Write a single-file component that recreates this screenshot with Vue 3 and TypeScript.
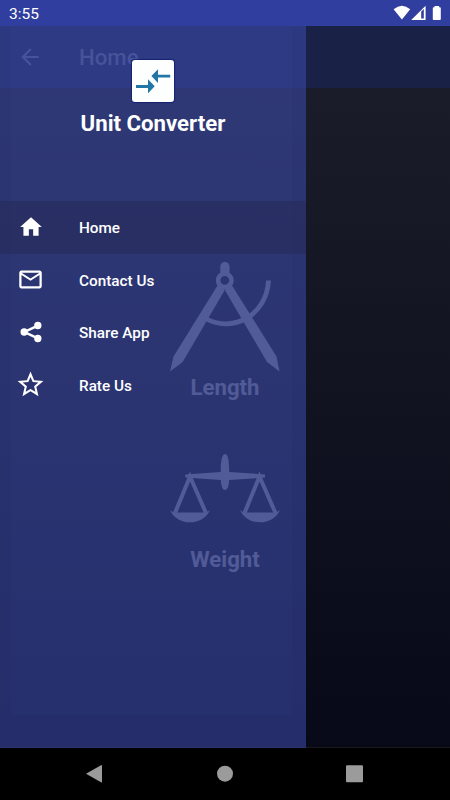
<script setup lang="ts">
interface MenuItem {
  label: string
  size: number
  path: string
  active?: boolean
}

const items: MenuItem[] = [
  { label: 'Home', size: 26, active: true, path: 'M10 20v-6h4v6h5v-8h3L12 3 2 12h3v8z' },
  {
    label: 'Contact Us',
    size: 27,
    path: 'M22 6c0-1.1-.9-2-2-2H4c-1.1 0-2 .9-2 2v12c0 1.1.9 2 2 2h16c1.1 0 2-.9 2-2V6zm-2 0l-8 5-8-5h16zm0 12H4V8l8 5 8-5v10z',
  },
  {
    label: 'Share App',
    size: 26,
    path: 'M2.3 12a3.4 3.4 0 1 1 6.8 0a3.4 3.4 0 1 1-6.8 0zM14.9 6a3.4 3.4 0 1 1 6.8 0a3.4 3.4 0 1 1-6.8 0zM14.9 18a3.4 3.4 0 1 1 6.8 0a3.4 3.4 0 1 1-6.8 0zM5.2 11L17.8 5l1 2.1-10.3 4.9 10.3 4.9-1 2.1L5.2 13z',
  },
  {
    label: 'Rate Us',
    size: 31,
    path: 'M22 9.24l-7.19-.62L12 2 9.19 8.63 2 9.24l5.46 4.73L5.82 21 12 17.27 18.18 21l-1.63-7.03L22 9.24zM12 15.4l-3.76 2.27 1-4.28-3.32-2.88 4.38-.38L12 6.1l1.71 4.04 4.38.38-3.32 2.88 1 4.28L12 15.4z',
  },
]
</script>

<template>
  <div class="phone">
    <header class="status">
      <span>3:55</span>
      <svg width="50" height="26" viewBox="0 0 50 26" fill="#fff">
        <path d="M1.6 9.2Q10 2.2 18.2 9.2L9.9 19.5z" />
        <path fill-rule="evenodd" d="M19.2 20L33.6 5.8V20zM29.2 11.5v7h2.6V9z" />
        <path d="M44.7 6h4.6v1.2h.8q.9 0 .9.9v11q0 .9-.9.9h-6.2q-.9 0-.9-.9v-11q0-.9.9-.9h.8z" transform="translate(-2.2)" />
      </svg>
    </header>

    <div class="stage">
      <div class="page">
        <div class="appbar">
          <svg class="back" width="26" height="26" viewBox="0 0 24 24">
            <path d="M20 11H7.83l5.59-5.59L12 4l-8 8 8 8 1.41-1.41L7.83 13H20v-2z" />
          </svg>
          <span>Home</span>
        </div>
        <main class="content">
          <section class="unit length">
            <svg width="110" height="110" viewBox="0 0 110 110">
              <path d="M50.3 12V4.5a4.6 4.6 0 0 1 9.2 0V12z" />
              <circle cx="54.8" cy="18.4" r="6.7" fill="none" stroke="currentColor" stroke-width="4.6" />
              <path d="M47.5 23.5L3.5 94.5 0 109.5 12.7 100 54.8 28 97 100 109.5 109.5 106.5 94.5 62 23.5 54.8 28z" />
              <path d="M35.5 56.5C64 72 97 52 98.5 18.5" fill="none" stroke="currentColor" stroke-width="4.8" />
            </svg>
            <h2>Length</h2>
          </section>
          <section class="unit weight">
            <svg width="110" height="70" viewBox="0 0 110 70">
              <path d="M55 0C50.5 0 50.8 15 50.8 18L15.3 20.5v3L50.8 26C51 31 52.3 36 55 36s4-5 4.2-10L95 23.5v-3L59.2 18C59.2 15 59.4 0 55 0z" />
              <g fill="none" stroke="currentColor" stroke-width="4">
                <path d="M5 59L20 22.5 36 59M74.5 59L89.5 22.5 105.5 59" />
              </g>
              <path d="M0 56.2Q3 58.6 6 58.6H34Q37 58.6 40 56.2C36 64 29 68.3 20 68.3S4 64 0 56.2zM70 56.2Q73 58.6 76 58.6H104Q107 58.6 110 56.2C106 64 99 68.3 90 68.3S74 64 70 56.2z" />
            </svg>
            <h2>Weight</h2>
          </section>
        </main>
      </div>

      <aside class="drawer">
        <div class="brand">
          <div class="logo">
            <svg width="42" height="42" viewBox="0 0 42 42">
              <path d="M4 25h12v-5.7l6.7 6.9-6.7 7v-5.3H4zM38.2 14.7H26v-5.4l-6.6 6.8 6.6 6.8v-5.3h12.2z" />
            </svg>
          </div>
          <h1>Unit Converter</h1>
        </div>
        <nav>
          <a v-for="item in items" :key="item.label" class="item" :class="{ active: item.active }">
            <span class="icon">
              <svg :width="item.size" :height="item.size" viewBox="0 0 24 24"><path :d="item.path" /></svg>
            </span>
            <span class="label">{{ item.label }}</span>
          </a>
        </nav>
      </aside>
    </div>

    <footer class="navbar">
      <svg width="450" height="52" viewBox="0 0 450 52" fill="#9b9b9b">
        <path d="M86 25.7L101 17.2Q102 16.8 102 17.8V33.8Q102 34.8 101 34.3z" />
        <circle cx="225" cy="25.7" r="8" />
        <rect x="346" y="17.2" width="17" height="17" rx="1" />
      </svg>
    </footer>
  </div>
</template>

<style>
body {
  margin: 0;
  background: #000;
}
</style>

<style scoped>
.phone {
  display: flex;
  flex-direction: column;
  width: 450px;
  height: 800px;
  overflow: hidden;
  font-family: Roboto, sans-serif;
  color: #fff;
}
.status {
  display: flex;
  justify-content: space-between;
  flex: none;
  height: 26px;
  padding: 0 8px 0 9px;
  background: #303f9f;
  font-size: 15.5px;
  line-height: 28px;
}
.stage {
  position: relative;
  flex: none;
  height: 722px;
}
.page {
  display: flex;
  flex-direction: column;
  height: 100%;
}
.appbar {
  display: flex;
  align-items: center;
  flex: none;
  height: 62px;
  padding-left: 17px;
  gap: 36px;
  background: #192147;
  color: #50587a;
  font-size: 22.2px;
  font-weight: 500;
}
.back {
  fill: currentColor;
}
.content {
  flex: 1;
  padding-top: 174px;
  border-bottom: 1px solid #1a1819;
  background: linear-gradient(#1b1c29, #070918);
  color: #676973;
}
.unit {
  display: flex;
  flex-direction: column;
  align-items: center;
}
.unit svg {
  display: block;
  fill: currentColor;
}
h2 {
  margin: 0;
  font-size: 22.2px;
  line-height: 26px;
  font-weight: 700;
}
.length h2 {
  margin-top: 2px;
}
.weight {
  margin-top: 54px;
}
.weight h2 {
  margin-top: 22px;
}
.drawer {
  position: absolute;
  inset: 0 auto 0 0;
  box-sizing: border-box;
  width: 306px;
  background: rgba(63, 81, 181, 0.55);
}
.drawer::before {
  content: '';
  position: absolute;
  inset: 0;
  border: solid rgba(10, 20, 60, 0.05);
  border-width: 0 14px 33px 11px;
}
.brand {
  display: flex;
  flex-direction: column;
  align-items: center;
  box-sizing: border-box;
  height: 175px;
  padding-top: 34px;
}
.logo {
  width: 42px;
  height: 42px;
  border-radius: 3px;
  background: #fdfefe;
  box-shadow: 0 0 1px 1px #18236f;
  fill: #2176a6;
}
.logo svg {
  display: block;
}
h1 {
  margin: 8px 0 0;
  font-size: 22.2px;
  line-height: 26px;
  font-weight: 700;
}
.item {
  position: relative;
  display: flex;
  align-items: center;
  height: 52.5px;
  padding-left: 15px;
  gap: 48px;
  font-size: 15.3px;
  font-weight: 500;
}
.item.active {
  background: rgba(32, 32, 64, 0.3);
}
.label {
  padding-top: 2px;
}
.icon {
  display: flex;
  align-items: center;
  justify-content: center;
  width: 31px;
  margin-right: -15px;
}
.icon svg {
  flex: none;
  fill: #fff;
}
.navbar {
  height: 52px;
  background: #000;
}
.navbar svg {
  display: block;
}
</style>
